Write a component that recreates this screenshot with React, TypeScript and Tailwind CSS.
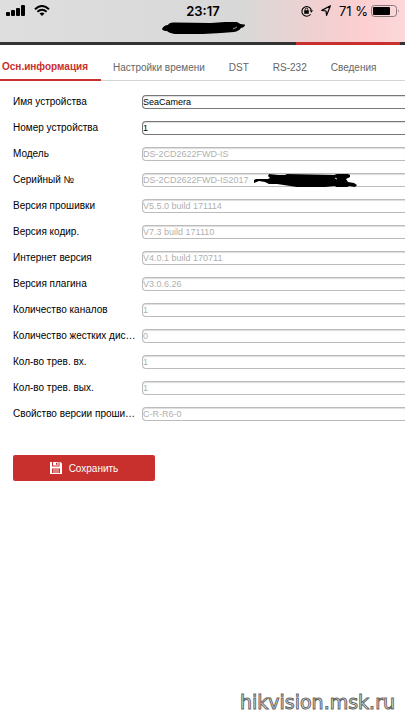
import clsx from "clsx";

interface Field {
  id: string;
  label: string;
  value: string;
  editable?: boolean;
}

const tabs = ["Осн.информация", "Настройки времени", "DST", "RS-232", "Сведения"];

const fields: Field[] = [
  { id: "name", label: "Имя устройства", value: "SeaCamera", editable: true },
  { id: "number", label: "Номер устройства", value: "1", editable: true },
  { id: "model", label: "Модель", value: "DS-2CD2622FWD-IS" },
  { id: "serial", label: "Серийный №", value: "DS-2CD2622FWD-IS2017" },
  { id: "firmware", label: "Версия прошивки", value: "V5.5.0 build 171114" },
  { id: "codec", label: "Версия кодир.", value: "V7.3 build 171110" },
  { id: "web", label: "Интернет версия", value: "V4.0.1 build 170711" },
  { id: "plugin", label: "Версия плагина", value: "V3.0.6.26" },
  { id: "channels", label: "Количество каналов", value: "1" },
  { id: "disks", label: "Количество жестких дис…", value: "0" },
  { id: "alarm-in", label: "Кол-во трев. вх.", value: "1" },
  { id: "alarm-out", label: "Кол-во трев. вых.", value: "1" },
  { id: "property", label: "Свойство версии проши…", value: "C-R-R6-0" },
];

function StatusBar() {
  return (
    <header className="h-[42px] bg-[linear-gradient(to_right,#dedede_0%,#d9d8d8_60%,#f0d0d1_78%,#fdcfd1_90%,#fbd8da_100%)] font-['Inter',sans-serif] text-black">
      <div className="grid h-[21px] grid-cols-[1fr_auto_1fr] items-center pl-[6px] pr-[5px]">
        <div className="flex items-center gap-[9px]">
          <svg width="19" height="11" viewBox="0 0 19 11" aria-hidden="true">
            <rect x="0" y="7" width="4" height="4" rx="1" />
            <rect x="5" y="5" width="4" height="6" rx="1" />
            <rect x="10" y="3" width="4" height="8" rx="1" />
            <rect x="15" y="0" width="4" height="11" rx="1" />
          </svg>
          <svg width="16" height="11" viewBox="0 0 16 11" aria-hidden="true">
            <path d="M1 4.2Q8-2.2 15 4.2" fill="none" stroke="black" strokeWidth="2" />
            <path d="M3.4 6.8Q8 2.6 12.6 6.8" fill="none" stroke="black" strokeWidth="1.9" />
            <path d="M5.5 8.6Q8 6.6 10.5 8.6L8 11Z" />
          </svg>
        </div>
        <span className="text-[13px] font-semibold leading-4">23:17</span>
        <div className="flex items-center justify-end">
          <svg className="mr-2" width="12" height="12" viewBox="0 0 12 12" aria-hidden="true">
            <path d="M9.6 9.2A4.8 4.8 0 1 1 10.3 5" fill="none" stroke="black" strokeWidth="1.1" />
            <path d="M8.6 5.3h3.4l-1.6 2.4z" />
            <rect x="3.2" y="5.3" width="4.6" height="3.4" rx=".5" />
            <path d="M4.2 5.6V4.4a1.3 1.3 0 0 1 2.6 0v1.2" fill="none" stroke="black" strokeWidth=".9" />
          </svg>
          <svg className="mr-2" width="10" height="11" viewBox="0 0 10 11" aria-hidden="true">
            <path d="M9.4 .8 .8 5.4l4.2.6.6 4.4z" fill="none" stroke="black" strokeWidth="1.2" strokeLinejoin="round" />
          </svg>
          <span className="mr-[3px] whitespace-nowrap text-[13px] leading-4">71 %</span>
          <svg width="29" height="12" viewBox="0 0 29 12" aria-hidden="true">
            <rect x=".5" y=".5" width="25" height="11" rx="3" fill="none" stroke="#897779" />
            <rect x="2" y="2" width="17" height="8" rx="1" />
            <path d="M27 4q1.6 2 0 4z" fill="#897779" />
          </svg>
        </div>
      </div>
      <svg className="mx-auto block" width="84" height="14" viewBox="0 0 84 14" aria-hidden="true">
        <path d="M1 8Q3 4 7 4 8 1 14 1.5L50 2 64 1H76Q80 4 84 3.5 84 6 80 7 78 10 73 11L60 12 42 13H14Q8 12 6 10 2 10 1 8Z" />
        <path d="M72 8l4-2" stroke="#bbb" strokeWidth=".8" />
      </svg>
    </header>
  );
}

function TabBar() {
  return (
    <nav className="flex h-[36px] border-b border-[#d5d5d5] text-[10px] leading-4">
      {tabs.map((tab, i) => (
        <button
          key={tab}
          type="button"
          className={clsx(
            "h-[36px] shrink-0 whitespace-nowrap",
            i === 0
              ? "border-b-2 border-[#c8302e] pl-[2px] pr-[13px] pt-[10px] font-bold text-[#c8302e]"
              : "px-3 pt-[10px] text-[#666]"
          )}
        >
          {tab}
        </button>
      ))}
    </nav>
  );
}

function FieldRow({ id, label, value, editable }: Field) {
  return (
    <div className="flex h-[26px] items-center gap-[3px] pl-[13px]">
      <label htmlFor={id} className="w-[126px] shrink-0 whitespace-nowrap text-[10px] leading-4 text-black">
        {label}
      </label>
      <div className="relative min-w-0 flex-1">
        <input
          id={id}
          type="text"
          defaultValue={value}
          disabled={!editable}
          className={clsx(
            "block h-[14px] w-full rounded-l-[4px] border border-r-0 text-[9px] leading-3 shadow-[inset_0_1px_1px_#ddd]",
            editable ? "border-[#777] text-black" : "border-[#bbb] text-[#b0b0b0]"
          )}
        />
        {id === "serial" && (
          <svg className="absolute left-[111px] top-0" width="104" height="14" viewBox="0 0 104 14" aria-hidden="true">
            <path d="M1 7l2-1h12l2-1-2-2 1-2 9 1h7l2-1 47 1 3-1h11l2 1v2l-4 2 2 3 6 1 3 2-2 2-6-1-3 2h-9l-2-2-10 1-28 0-20-3-8 0-4-2-6-1-5 2z" />
            <path d="M82 5l2 1" stroke="#ddd" />
          </svg>
        )}
      </div>
    </div>
  );
}

export default function App() {
  return (
    <div className="flex min-h-screen flex-col overflow-hidden bg-white font-['Liberation_Sans',Arial,sans-serif]">
      <StatusBar />
      <div className="flex h-[3px] bg-[#333]">
        <div className="ml-[73%] mr-[5px] flex-1 bg-[#c8302e]" />
      </div>
      <TabBar />
      <main className="flex-1 pt-2">
        <form onSubmit={(e) => e.preventDefault()}>
          {fields.map((field) => (
            <FieldRow key={field.id} {...field} />
          ))}
          <button
            type="submit"
            className="ml-[13px] mt-7 flex h-[26px] w-[142px] items-center justify-center gap-[7px] rounded-[2px] bg-[#c8302e] text-[10px] text-white"
          >
            <svg width="12" height="12" viewBox="0 0 12 12" aria-hidden="true">
              <path
                fill="white"
                fillRule="evenodd"
                d="M0 0h2v4.5h7.5V0h1L12 1.5V12H0zM2 6.5v4.5h8V6.5zM3 0h5.5v3.5H3zM6 .8v2h1.5v-2z"
              />
              <path d="M3 8h6M3 10h6" stroke="white" strokeWidth=".8" />
            </svg>
            Сохранить
          </button>
        </form>
      </main>
      <footer className="flex justify-end pb-[2px] pr-[10px]">
        <span className="font-['DejaVu_Sans',sans-serif] text-[19px] leading-8 text-white [-webkit-text-stroke:1px_#666]">
          hikvision.msk.ru
        </span>
      </footer>
    </div>
  );
}
